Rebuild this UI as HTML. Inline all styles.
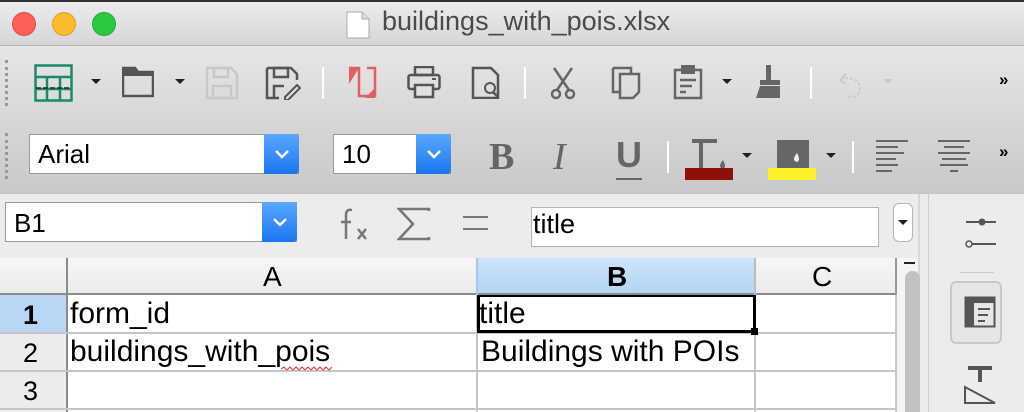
<!DOCTYPE html>
<html><head><style>
*{margin:0;padding:0;box-sizing:border-box}
body{width:1024px;height:412px;overflow:hidden;background:#fff;font-family:"Liberation Sans",Arial,sans-serif;position:relative}
.a{position:absolute}
.tl{position:absolute;top:12px;width:24px;height:24px;border-radius:50%}
.ic{position:absolute}
.dd{position:absolute;width:0;height:0;border-left:5px solid transparent;border-right:5px solid transparent;border-top:5px solid #222}
.sep{position:absolute;width:2px;height:32px;background:#fff}
.grip{position:absolute;left:5px;width:3px;border-left:3px dotted #999}
.cb{position:absolute;background:#fff;border:1px solid #9a9a9a;font-size:26px;color:#000;padding-left:8px;line-height:38px}
.bb{position:absolute;background:linear-gradient(#5aa8ff,#1976f0);border-radius:0 4px 4px 0}
.hl{position:absolute;background:#c6c6c6;height:2px}
.vl{position:absolute;background:#c6c6c6;width:2px}
.t{position:absolute;font-size:25px;color:#000;white-space:nowrap}
.c{font-size:30px;top:0}
</style></head><body>
<div class="a" style="left:0;top:0;width:1024px;height:46px;background:linear-gradient(#ececec,#d6d6d6);border-bottom:1px solid #b8b8b8;border-top:2px solid #333"></div>
<div class="tl" style="left:12px;background:#fc5f57;border:1px solid #df4943"></div>
<div class="tl" style="left:52px;background:#fdbc2e;border:1px solid #de9f25"></div>
<div class="tl" style="left:92px;background:#2bc840;border:1px solid #1fa832"></div>
<svg class="ic" style="left:346px;top:11px" width="24" height="28"><path d="M1 1h15l7 7v19H1z" fill="#fff" stroke="#aaa"/><path d="M16 1v7h7" fill="#ddd" stroke="#aaa"/></svg>
<div class="a" style="left:382px;top:6px;font-size:27px;color:#4a4a4a">buildings_with_pois.xlsx</div>
<div class="a" style="left:0;top:46px;width:1024px;height:148px;background:linear-gradient(#e6e6e6,#c8c8c8)"></div>
<div class="grip" style="top:60px;height:46px"></div>
<div class="grip" style="top:133px;height:46px"></div>
<svg class="ic" style="left:34px;top:64px" width="40" height="38"><rect x="1.5" y="1.5" width="36" height="35" fill="none" stroke="#1a8a6c" stroke-width="2.5"/><path d="M1 13h37M1 25h37M13 13v24M26 13v24" stroke="#1a8a6c" stroke-width="2.5"/><path d="M2 24h35" stroke="#222" stroke-width="1.5" stroke-dasharray="5 2"/></svg>
<div class="dd" style="left:91px;top:79px"></div>
<svg class="ic" style="left:122px;top:66px" width="32" height="32"><path d="M1 2h12l3 4h15v24H1z" fill="none" stroke="#555" stroke-width="2.5"/><path d="M1 2h12l3 4h15v4H1z" fill="#555"/></svg>
<div class="dd" style="left:175px;top:79px"></div>
<svg class="ic" style="left:205px;top:66px" width="34" height="34"><path d="M2 2h24l6 6v24H2z" fill="none" stroke="#c8c8c8" stroke-width="2.5"/><rect x="9" y="2" width="14" height="9" fill="none" stroke="#c8c8c8" stroke-width="2.5"/><rect x="8" y="20" width="18" height="12" fill="none" stroke="#c8c8c8" stroke-width="2.5"/></svg>
<svg class="ic" style="left:265px;top:66px" width="36" height="34"><path d="M2 2h24l6 6v6M2 2v30h12" fill="none" stroke="#555" stroke-width="2.5"/><rect x="9" y="2" width="14" height="9" fill="none" stroke="#555" stroke-width="2.5"/><path d="M9 32V20h10" fill="none" stroke="#555" stroke-width="2.5"/><path d="M20 31l12-12 3 3-12 12h-3z" fill="none" stroke="#555" stroke-width="2"/></svg>
<div class="sep" style="left:322px;top:67px"></div>
<svg class="ic" style="left:347px;top:66px" width="30" height="33"><path d="M2 2h10v28h16V2h-8" fill="none" stroke="#e06060" stroke-width="2.5"/><path d="M2 2h10l-10 16z" fill="#e06060"/><path d="M18 32l10-10v10z" fill="#e06060"/></svg>
<svg class="ic" style="left:407px;top:66px" width="34" height="33"><rect x="8" y="1" width="18" height="8" fill="none" stroke="#555" stroke-width="2.5"/><rect x="1.5" y="9" width="31" height="14" rx="2" fill="none" stroke="#555" stroke-width="2.5"/><rect x="8" y="19" width="18" height="12" fill="#e0e0e0" stroke="#555" stroke-width="2.5"/><rect x="25" y="12" width="4" height="2" fill="#555"/></svg>
<svg class="ic" style="left:471px;top:66px" width="30" height="33"><path d="M2 2h18l7 7v23H2z" fill="none" stroke="#555" stroke-width="2.5"/><circle cx="19" cy="22" r="5" fill="none" stroke="#555" stroke-width="2"/><path d="M22 26l5 5" stroke="#555" stroke-width="2.5"/></svg>
<div class="sep" style="left:524px;top:67px"></div>
<svg class="ic" style="left:548px;top:66px" width="30" height="34"><path d="M6 2l15 22M24 2L9 24" stroke="#666" stroke-width="2.5"/><circle cx="8" cy="28" r="4" fill="none" stroke="#666" stroke-width="2.5"/><circle cx="22" cy="28" r="4" fill="none" stroke="#666" stroke-width="2.5"/></svg>
<svg class="ic" style="left:611px;top:66px" width="32" height="34"><path d="M2 2h18v6M2 2v24h6" fill="none" stroke="#666" stroke-width="2.5"/><path d="M9 8h19v18l-6 6H9z" fill="none" stroke="#666" stroke-width="2.5"/></svg>
<svg class="ic" style="left:673px;top:64px" width="32" height="36"><rect x="2" y="6" width="26" height="28" fill="none" stroke="#666" stroke-width="2.5"/><rect x="8" y="1" width="14" height="9" fill="#666"/><path d="M7 16h16M7 22h12M7 28h6" stroke="#666" stroke-width="2.5"/></svg>
<div class="dd" style="left:722px;top:79px"></div>
<svg class="ic" style="left:756px;top:64px" width="30" height="36"><rect x="10" y="1" width="5" height="16" fill="#666"/><rect x="4" y="16" width="20" height="5" fill="#666"/><path d="M4 22h20v12H0z" fill="#666"/></svg>
<div class="sep" style="left:810px;top:67px"></div>
<svg class="ic" style="left:836px;top:66px" width="28" height="34"><path d="M4 14c10-5 20 0 20 8s-8 10-12 9" fill="none" stroke="#ccc" stroke-width="2" stroke-dasharray="3 2"/><path d="M4 14l6-6M4 14l6 4" stroke="#ccc" stroke-width="2"/></svg>
<div class="dd" style="left:883px;top:79px;border-top-color:#ccc"></div>
<div class="a" style="left:999px;top:70px;font-size:17px;font-weight:bold;color:#000">»</div>
<div class="cb" style="left:29px;top:134px;width:270px;height:40px">Arial</div>
<div class="bb" style="left:264px;top:134px;width:35px;height:40px"></div>
<svg class="ic" style="left:274px;top:149px" width="16" height="10"><path d="M2 2l6 6 6-6" fill="none" stroke="#fff" stroke-width="2.5"/></svg>
<div class="cb" style="left:333px;top:134px;width:118px;height:40px">10</div>
<div class="bb" style="left:416px;top:134px;width:35px;height:40px"></div>
<svg class="ic" style="left:426px;top:149px" width="16" height="10"><path d="M2 2l6 6 6-6" fill="none" stroke="#fff" stroke-width="2.5"/></svg>
<div class="a" style="left:489px;top:135px;font-family:'Liberation Serif',serif;font-weight:bold;font-size:38px;color:#666">B</div>
<div class="a" style="left:553px;top:135px;font-family:'Liberation Serif',serif;font-style:italic;font-size:38px;color:#666">I</div>
<div class="a" style="left:616px;top:134px;font-weight:bold;font-size:36px;color:#666">U</div>
<div class="a" style="left:616px;top:178px;width:26px;height:2px;background:#666"></div>
<div class="sep" style="left:667px;top:141px"></div>
<svg class="ic" style="left:683px;top:138px" width="50" height="42"><path d="M9 3h25M18 3v28" stroke="#666" stroke-width="4"/><path d="M40 22c-3 4-4 6-2 8s4 0 4-2-2-6-2-6z" fill="#666"/><rect x="2" y="30" width="48" height="12" fill="#8f1008"/></svg>
<div class="dd" style="left:742px;top:153px"></div>
<svg class="ic" style="left:768px;top:139px" width="50" height="41"><rect x="9" y="1" width="32" height="29" fill="#666"/><path d="M29 14c-3 4-4 6-2 8s4 0 4-2-2-6-2-6z" fill="#eee"/><rect x="0" y="29" width="48" height="12" fill="#ffef2b"/></svg>
<div class="dd" style="left:826px;top:153px"></div>
<div class="sep" style="left:852px;top:141px"></div>
<svg class="ic" style="left:874px;top:139px" width="34" height="34"><path d="M2 2h32M2 8h22M2 14h28M2 20h20M2 26h22M2 32h16" stroke="#666" stroke-width="2"/></svg>
<svg class="ic" style="left:936px;top:139px" width="36" height="34"><path d="M2 2h32M8 8h20M2 14h32M6 20h24M4 26h28M14 32h8" stroke="#666" stroke-width="2"/></svg>
<div class="a" style="left:999px;top:142px;font-size:17px;font-weight:bold;color:#000">»</div>
<div class="a" style="left:0;top:194px;width:1024px;height:64px;background:#ececec"></div>
<div class="cb" style="left:5px;top:202px;width:292px;height:40px;line-height:40px">B1</div>
<div class="bb" style="left:262px;top:202px;width:35px;height:40px"></div>
<svg class="ic" style="left:272px;top:217px" width="16" height="10"><path d="M2 2l6 6 6-6" fill="none" stroke="#fff" stroke-width="2.5"/></svg>
<svg class="ic" style="left:338px;top:207px" width="34" height="34"><path d="M14 3c-4-1-6 1-6 5v24M3 15h10" fill="none" stroke="#777" stroke-width="2.5"/><path d="M20 22l8 10M28 22l-8 10" stroke="#777" stroke-width="2.5"/></svg>
<svg class="ic" style="left:397px;top:207px" width="34" height="34"><path d="M32 4V2H2l14 15L2 32h30v-2" fill="none" stroke="#777" stroke-width="2.5"/></svg>
<div class="a" style="left:463px;top:216px;width:25px;height:2px;background:#777"></div>
<div class="a" style="left:463px;top:228px;width:25px;height:2px;background:#777"></div>
<div class="a" style="left:531px;top:207px;width:348px;height:40px;background:#fff;border:1px solid #b4b4b4;font-size:27px;line-height:32px;padding-left:1px">title</div>
<div class="a" style="left:893px;top:203px;width:20px;height:39px;background:#fff;border:1px solid #b4b4b4;border-radius:6px"></div>
<div class="dd" style="left:898px;top:220px"></div>
<div class="a" style="left:918px;top:194px;width:106px;height:218px;background:#ececec;border-left:2px solid #d8d8d8"></div>
<div class="a" style="left:928px;top:194px;width:1px;height:218px;background:#d0d0d0"></div>
<svg class="ic" style="left:964px;top:214px" width="34" height="40"><path d="M2 8h30M2 30h30" stroke="#555" stroke-width="2"/><circle cx="18" cy="8" r="3.5" fill="#555"/><circle cx="5" cy="30" r="3" fill="#ececec" stroke="#555" stroke-width="1.5"/></svg>
<div class="a" style="left:960px;top:272px;width:34px;height:1px;background:#ccc"></div>
<div class="a" style="left:950px;top:281px;width:52px;height:63px;border:2px solid #c8c8c8;border-radius:6px;background:#e6e6e6"></div>
<svg class="ic" style="left:964px;top:296px" width="32" height="32"><rect x="1.5" y="1.5" width="29" height="29" fill="none" stroke="#555" stroke-width="2"/><rect x="1" y="1" width="30" height="6" fill="#555"/><rect x="1" y="7" width="9" height="24" fill="#555"/><path d="M14 13h12M14 19h10M14 25h7" stroke="#555" stroke-width="2"/></svg>
<svg class="ic" style="left:964px;top:365px" width="34" height="40"><path d="M4 3h24M16 3v14" stroke="#555" stroke-width="4"/><path d="M1 22v16h30z" fill="none" stroke="#555" stroke-width="2"/></svg>
<div class="a" style="left:0;top:258px;width:897px;height:37px;background:linear-gradient(#f6f6f6,#ebebeb)"></div>
<div class="a" style="left:477px;top:258px;width:278px;height:37px;background:linear-gradient(#cde4fb,#b0d4f6)"></div>
<div class="a" style="left:0;top:295px;width:67px;height:117px;background:#ececec"></div>
<div class="a" style="left:0;top:295px;width:67px;height:38px;background:#b8d7f5"></div>
<div class="a" style="left:0;top:293px;width:897px;height:2px;background:#8c8c8c"></div>
<div class="a" style="left:66px;top:258px;width:2px;height:154px;background:#8c8c8c"></div>
<div class="vl" style="left:476px;top:258px;height:37px;background:#a8c8e8"></div>
<div class="vl" style="left:754px;top:258px;height:37px;background:#bbb"></div>
<div class="vl" style="left:895px;top:258px;height:37px;background:#999"></div>
<div class="t" style="left:263px;top:261px;font-size:28px">A</div>
<div class="t" style="left:607px;top:261px;font-weight:bold;font-size:28px">B</div>
<div class="t" style="left:812px;top:261px;font-size:28px">C</div>
<div class="t" style="left:23px;top:300px;font-weight:bold;font-size:27px">1</div>
<div class="t" style="left:23px;top:338px;font-size:27px">2</div>
<div class="t" style="left:23px;top:376px;font-size:27px">3</div>
<div class="hl" style="left:0;top:332px;width:897px"></div>
<div class="hl" style="left:0;top:370px;width:897px"></div>
<div class="hl" style="left:0;top:408px;width:897px"></div>
<div class="vl" style="left:476px;top:295px;height:117px"></div>
<div class="vl" style="left:754px;top:295px;height:117px"></div>
<div class="vl" style="left:895px;top:295px;height:117px"></div>
<div class="a" style="left:477px;top:295px;width:279px;height:38px;border:3px solid #000;border-top:2px solid #000"></div>
<div class="a" style="left:751px;top:328px;width:7px;height:7px;background:#000"></div>
<div class="t" style="left:70px;top:297px;font-size:30px">form_id</div>
<div class="t" style="left:479px;top:297px;font-size:30px">title</div>
<div class="t" style="left:70px;top:335px;font-size:30px">buildings_with_pois</div>
<svg class="ic" style="left:281px;top:366px" width="56" height="6"><path d="M0 3l3-2 3 3 3-3 3 3 3-3 3 3 3-3 3 3 3-3 3 3 3-3 3 3 3-3 3 3 3-3 3 3 3-3" fill="none" stroke="#e33" stroke-width="1"/></svg>
<div class="t" style="left:481px;top:335px;font-size:30px">Buildings with POIs</div>
<div class="a" style="left:897px;top:258px;width:21px;height:154px;background:#f4f4f4"></div>
<div class="a" style="left:904px;top:262px;width:11px;height:2px;background:#222"></div>
<div class="a" style="left:905px;top:271px;width:15px;height:141px;background:#c2c2c2;border-radius:8px 8px 0 0"></div>
</body></html>
